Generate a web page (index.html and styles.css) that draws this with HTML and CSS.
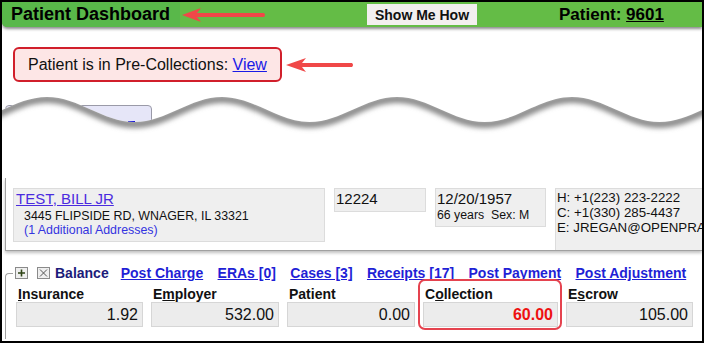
FILE: index.html
```html
<!DOCTYPE html>
<html lang="en">

<head>
    <meta charset="UTF-8">
    <meta name="viewport" content="width=device-width, initial-scale=1.0">
    <title>Patient Dashboard</title>
    <link rel="stylesheet" href="styles.css">
</head>

<body>
    <div class="screen">
        <!-- green title bar -->
        <header class="topbar">
            <div class="title">Patient Dashboard</div>
            <svg class="arrow arrow-title" width="84" height="16" viewBox="0 0 84 16">
                <path d="M0,8 L19,1 L15,6 L82,6 Q84,8 82,10 L15,10 L19,15 Z" fill="#f04848" />
            </svg>
            <button type="button" class="how">Show Me How</button>
            <div class="patient">Patient: <u>9601</u></div>
        </header>

        <div class="alert-row">
            <div class="alert">Patient is in Pre-Collections: <a href="#">View</a></div>
            <svg class="arrow arrow-alert" width="68" height="16" viewBox="0 0 68 16">
                <path d="M0,8 L20,1 L16,6 L66,6 Q68,8 66,10 L16,10 L20,15 Z" fill="#f04848" />
            </svg>
        </div>

        <!-- torn edge: the page between here and the demographics is cut away -->
        <div class="cut">
            <div class="tab"><span class="tab-mark"></span></div>
            <svg class="tear" width="700" height="96" viewBox="0 0 700 96">
                <defs>
                    <clipPath id="below">
                        <path d="M-42.5,40 C-10.5,40 13,15 45,15 S100.5,40 132.5,40 S188,15 220,15 S275.5,40 307.5,40 S363,15 395,15 S450.5,40 482.5,40 S538,15 570,15 S625.5,40 657.5,40 S713,15 745,15 L745,96 L-42.5,96 Z" />
                    </clipPath>
                    <filter id="soft" x="-5%" y="-50%" width="110%" height="200%">
                        <feGaussianBlur stdDeviation="2.5" />
                    </filter>
                </defs>
                <path d="M-42.5,40 C-10.5,40 13,15 45,15 S100.5,40 132.5,40 S188,15 220,15 S275.5,40 307.5,40 S363,15 395,15 S450.5,40 482.5,40 S538,15 570,15 S625.5,40 657.5,40 S713,15 745,15 L745,96 L-42.5,96 Z" fill="#fff" />
                <g clip-path="url(#below)">
                    <path d="M-42.5,40 C-10.5,40 13,15 45,15 S100.5,40 132.5,40 S188,15 220,15 S275.5,40 307.5,40 S363,15 395,15 S450.5,40 482.5,40 S538,15 570,15 S625.5,40 657.5,40 S713,15 745,15" transform="translate(0,2)" fill="none" stroke="#8c8c8c" stroke-width="8" filter="url(#soft)" />
                </g>
            </svg>
        </div>

        <section class="demo">
            <div class="box box-name">
                <a href="#" class="name">TEST, BILL JR</a>
                <div class="addr">3445 FLIPSIDE RD, WNAGER, IL 33321</div>
                <div class="addr addr-more">(1 Additional Addresses)</div>
            </div>
            <div class="box box-id">12224</div>
            <div class="box box-dob">
                <div class="dob">12/20/1957</div>
                <div class="age">66 years&nbsp; Sex: M</div>
            </div>
            <div class="box box-contact">
                <div>H: +1(223) 223-2222</div>
                <div>C: +1(330) 285-4437</div>
                <div>E: JREGAN@OPENPRACTICE.COM</div>
            </div>
        </section>

        <fieldset class="balance">
            <legend>
                <div class="legend-row">
                    <svg class="icon" width="13" height="12" viewBox="0 0 13 12">
                        <rect x="0.5" y="0.5" width="12" height="11" fill="#efefef" stroke="#8a8a8a" />
                        <path d="M6.5,2.5 V9.5 M3,6 H10" stroke="#2f4416" stroke-width="1.6" />
                    </svg>
                    <svg class="icon icon-x" width="13" height="12" viewBox="0 0 13 12">
                        <rect x="0.5" y="0.5" width="12" height="11" fill="#efefef" stroke="#8a8a8a" />
                        <path d="M3,2.5 L10,9.5 M10,2.5 L3,9.5" stroke="#555" stroke-width="1" />
                    </svg>
                    <span class="legend-title">Balance</span>
                    <a href="#" class="act act-first">Post Charge</a>
                    <a href="#" class="act">ERAs [0]</a>
                    <a href="#" class="act">Cases [3]</a>
                    <a href="#" class="act">Receipts [17]</a>
                    <a href="#" class="act">Post Payment</a>
                    <a href="#" class="act">Post Adjustment</a>
                </div>
            </legend>

            <div class="amounts">
                <div class="cell cell-ins">
                    <div class="label"><u>I</u>nsurance</div>
                    <div class="value">1.92</div>
                </div>
                <div class="cell cell-emp">
                    <div class="label">E<u>m</u>ployer</div>
                    <div class="value">532.00</div>
                </div>
                <div class="cell cell-pat">
                    <div class="label">Patient</div>
                    <div class="value">0.00</div>
                </div>
                <div class="cell cell-col">
                    <div class="label">C<u>o</u>llection</div>
                    <div class="value value-due">60.00</div>
                    <span class="hl"></span>
                </div>
                <div class="cell cell-esc">
                    <div class="label">E<u>s</u>crow</div>
                    <div class="value">105.00</div>
                </div>
            </div>
        </fieldset>
    </div>
</body>

</html>
```

FILE: styles.css
```css
body {
    margin: 0;
    font-family: "Liberation Sans", Arial, sans-serif;
    color: #111;
}

.screen {
    width: 704px;
    height: 343px;
    box-sizing: border-box;
    border: 2px solid #000;
    overflow: hidden;
    background: #fff;
}

/* title bar */
.topbar {
    display: flex;
    align-items: center;
    height: 25px;
    background: #64bc46;
    border-bottom-left-radius: 5px;
    box-shadow: 0 2px 3px rgba(0, 0, 0, .45);
    position: relative;
}

.title {
    width: 169px;
    height: 25px;
    padding-left: 9px;
    line-height: 25px;
    background: #59b84a;
    border-bottom-left-radius: 5px;
    font-size: 18px;
    font-weight: bold;
    color: #000;
}

.arrow {
    display: block;
    flex-shrink: 0;
}

.arrow-title {
    margin-left: 2px;
}

.how {
    margin-left: 101px;
    width: 110px;
    height: 21px;
    padding: 0;
    border: none;
    background: #f3efef;
    font-family: inherit;
    font-size: 14px;
    font-weight: bold;
    color: #111;
}

.patient {
    margin-left: 82px;
    font-size: 17px;
    font-weight: bold;
    color: #000;
}

/* pre-collections notice */
.alert-row {
    display: flex;
    align-items: center;
    padding: 20px 0 0 11px;
}

.alert {
    height: 35px;
    box-sizing: border-box;
    padding: 0 13px;
    line-height: 31px;
    border: 2px solid #d11f2b;
    border-radius: 6px;
    background: #fde6e6;
    font-size: 16px;
}

.alert a {
    color: #1a1ae6;
}

.arrow-alert {
    margin-left: 4px;
}

/* cut-away area */
.cut {
    position: relative;
    height: 96px;
    box-sizing: border-box;
    padding: 23px 0 0 3px;
}

.tab {
    width: 147px;
    height: 40px;
    box-sizing: border-box;
    padding-top: 15px;
    border: 1px solid #9a9aa8;
    border-radius: 4px;
    background: #e6e6f8;
}

.tab-mark {
    display: block;
    width: 7px;
    height: 4px;
    margin-left: 122px;
    background: #1515d8;
}

.tear {
    position: absolute;
    top: 0;
    left: 0;
}

/* demographics strip */
.demo {
    display: flex;
    align-items: flex-start;
    gap: 9px;
    height: 73px;
    box-sizing: border-box;
    margin-left: 3px;
    padding: 10px 0 0 7px;
    border-left: 1px solid #a0a0a0;
    border-bottom: 1px solid #a0a0a0;
    box-shadow: 0 2px 3px rgba(0, 0, 0, .25);
    overflow: hidden;
}

.box {
    flex-shrink: 0;
    box-sizing: border-box;
    border: 1px solid #dcdcdc;
    background: #efefef;
}

.box-name {
    width: 312px;
    height: 54px;
    padding: 1px 0 0 2px;
}

.name {
    display: block;
    font-size: 15px;
    line-height: 18px;
    color: #4a2bdf;
}

.addr {
    margin-left: 8px;
    font-size: 12.4px;
    line-height: 14px;
    color: #111;
}

.name + .addr {
    margin-top: 1px;
}

.addr-more {
    color: #3434e0;
}

.box-id {
    width: 92px;
    height: 24px;
    padding: 1px 0 0 1px;
    font-size: 15px;
    line-height: 18px;
}

.box-dob {
    width: 111px;
    height: 39px;
    padding: 1px 0 0 1px;
}

.dob {
    font-size: 15px;
    line-height: 18px;
}

.age {
    font-size: 12.3px;
    line-height: 15px;
}

.box-contact {
    width: 170px;
    height: 63px;
    padding: 1px 0 0 1px;
    font-size: 13.3px;
    line-height: 15px;
    white-space: nowrap;
}

/* balance group */
.balance {
    margin: 14px 0 0 3px;
    padding: 5px 0 12px 10px;
    border: none;
    border-top: 1px solid #a0a0a0;
    border-left: 1px solid #a0a0a0;
    border-top-left-radius: 4px;
    min-width: 0;
}

.balance legend {
    margin-left: -3px;
    padding: 0 30px 0 2px;
}

.legend-row {
    display: flex;
    align-items: center;
    height: 16px;
    font-size: 14px;
    font-weight: bold;
    line-height: 16px;
    white-space: nowrap;
}

.icon {
    display: block;
    flex-shrink: 0;
}

.icon-x {
    margin-left: 9px;
}

.legend-title {
    margin-left: 5px;
    color: #1c1c7a;
}

.act {
    margin-left: 14.4px;
    color: #1f1fd6;
}

.act-first {
    margin-left: 12px;
}

.amounts {
    display: flex;
    gap: 8px;
}

.cell {
    position: relative;
    width: 127px;
}

.cell-emp,
.cell-pat {
    width: 128px;
}

.cell-col {
    width: 135px;
}

.label {
    padding-left: 2px;
    font-size: 14px;
    font-weight: bold;
    line-height: 16px;
    color: #111;
}

.value {
    height: 25px;
    box-sizing: border-box;
    padding-right: 4px;
    border: 1px solid #d6d6d6;
    background: #ececec;
    text-align: right;
    font-size: 16px;
    line-height: 23px;
}

.value-due {
    color: #ee1111;
    font-weight: bold;
}

/* annotation ring around the collection amount */
.hl {
    position: absolute;
    top: -7px;
    right: -4px;
    bottom: -3px;
    left: -5px;
    border: 2px solid #e5434f;
    border-radius: 7px;
}
```
